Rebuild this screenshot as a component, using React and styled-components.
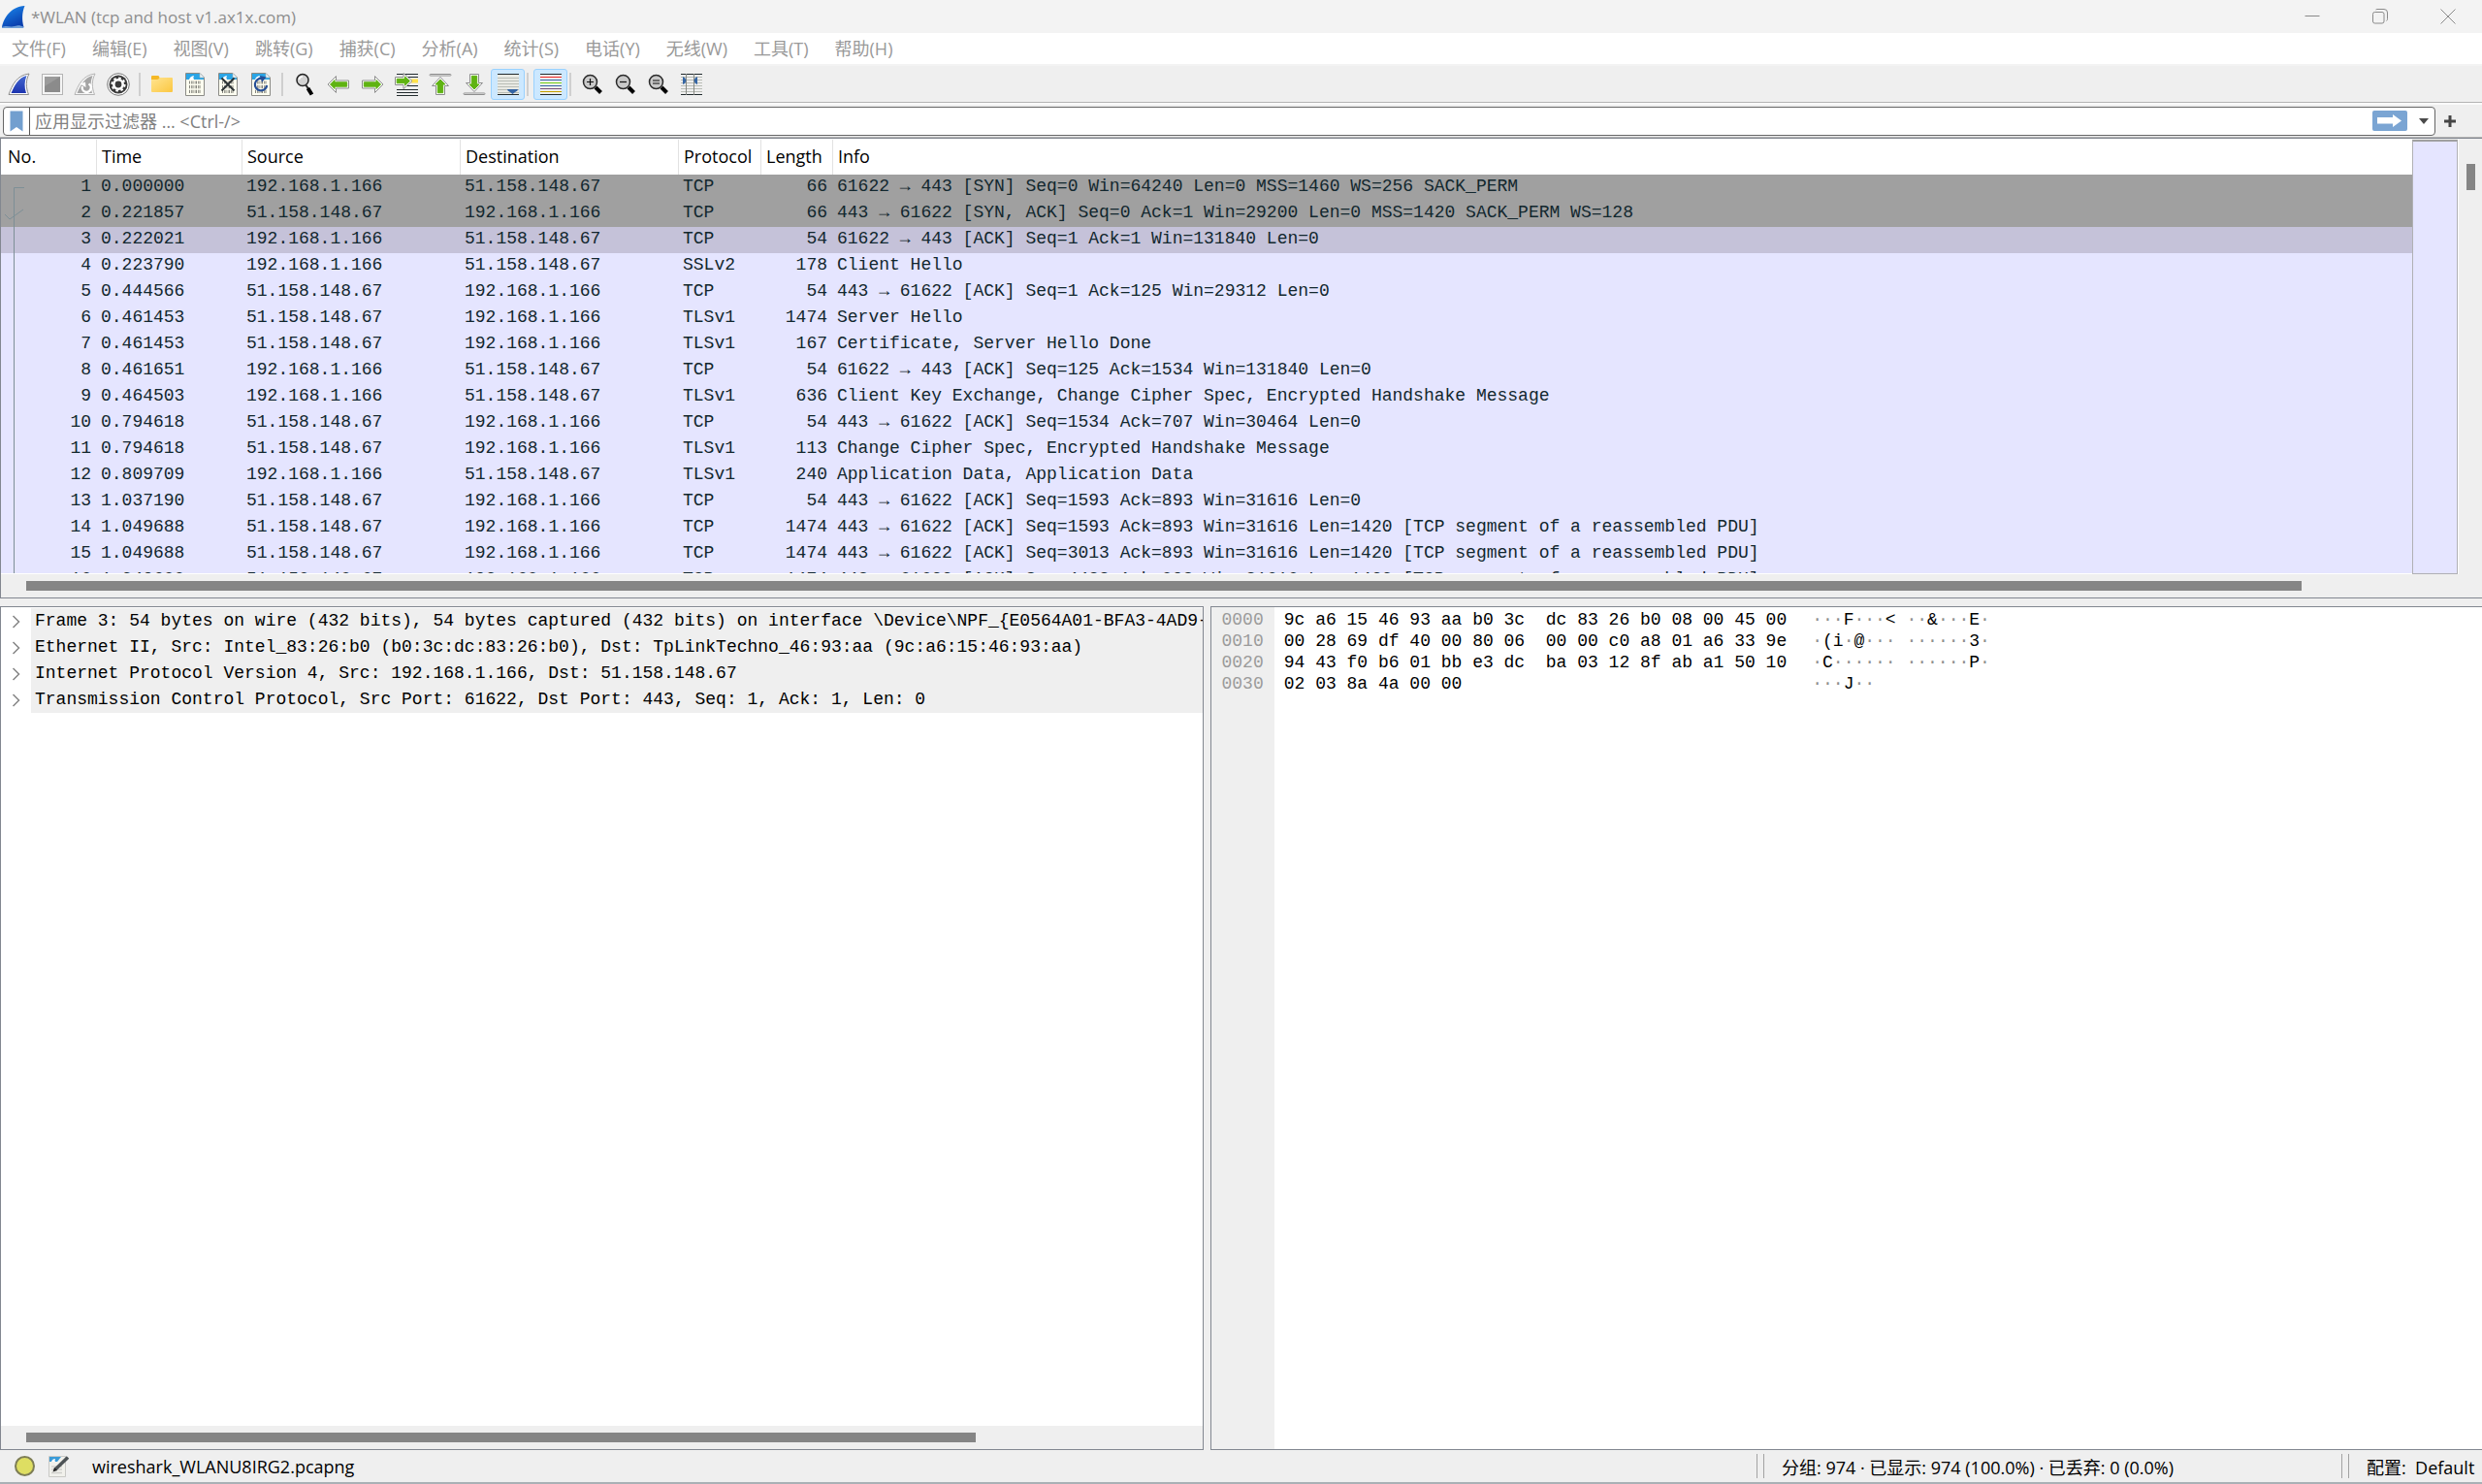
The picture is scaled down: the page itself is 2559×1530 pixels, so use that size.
import React from 'react';
import styled, { createGlobalStyle, css } from 'styled-components';

const MENUS = [
  '文件(F)',
  '编辑(E)',
  '视图(V)',
  '跳转(G)',
  '捕获(C)',
  '分析(A)',
  '统计(S)',
  '电话(Y)',
  '无线(W)',
  '工具(T)',
  '帮助(H)',
];

const LOCAL = '192.168.1.166';
const REMOTE = '51.158.148.67';

const PACKETS = [
  ['0.000000', 'out', 'TCP', 66, '61622 → 443 [SYN] Seq=0 Win=64240 Len=0 MSS=1460 WS=256 SACK_PERM', 'grey'],
  ['0.221857', 'in', 'TCP', 66, '443 → 61622 [SYN, ACK] Seq=0 Ack=1 Win=29200 Len=0 MSS=1420 SACK_PERM WS=128', 'grey'],
  ['0.222021', 'out', 'TCP', 54, '61622 → 443 [ACK] Seq=1 Ack=1 Win=131840 Len=0', 'selected'],
  ['0.223790', 'out', 'SSLv2', 178, 'Client Hello'],
  ['0.444566', 'in', 'TCP', 54, '443 → 61622 [ACK] Seq=1 Ack=125 Win=29312 Len=0'],
  ['0.461453', 'in', 'TLSv1', 1474, 'Server Hello'],
  ['0.461453', 'in', 'TLSv1', 167, 'Certificate, Server Hello Done'],
  ['0.461651', 'out', 'TCP', 54, '61622 → 443 [ACK] Seq=125 Ack=1534 Win=131840 Len=0'],
  ['0.464503', 'out', 'TLSv1', 636, 'Client Key Exchange, Change Cipher Spec, Encrypted Handshake Message'],
  ['0.794618', 'in', 'TCP', 54, '443 → 61622 [ACK] Seq=1534 Ack=707 Win=30464 Len=0'],
  ['0.794618', 'in', 'TLSv1', 113, 'Change Cipher Spec, Encrypted Handshake Message'],
  ['0.809709', 'out', 'TLSv1', 240, 'Application Data, Application Data'],
  ['1.037190', 'in', 'TCP', 54, '443 → 61622 [ACK] Seq=1593 Ack=893 Win=31616 Len=0'],
  ['1.049688', 'in', 'TCP', 1474, '443 → 61622 [ACK] Seq=1593 Ack=893 Win=31616 Len=1420 [TCP segment of a reassembled PDU]'],
  ['1.049688', 'in', 'TCP', 1474, '443 → 61622 [ACK] Seq=3013 Ack=893 Win=31616 Len=1420 [TCP segment of a reassembled PDU]'],
  ['1.049688', 'in', 'TCP', 1474, '443 → 61622 [ACK] Seq=4433 Ack=893 Win=31616 Len=1420 [TCP segment of a reassembled PDU]'],
];

const COLUMNS = [
  { name: 'No.', width: 98 },
  { name: 'Time', width: 150 },
  { name: 'Source', width: 225 },
  { name: 'Destination', width: 225 },
  { name: 'Protocol', width: 85 },
  { name: 'Length', width: 74 },
  { name: 'Info' },
];

const DETAILS = [
  'Frame 3: 54 bytes on wire (432 bits), 54 bytes captured (432 bits) on interface \\Device\\NPF_{E0564A01-BFA3-4AD9-9',
  'Ethernet II, Src: Intel_83:26:b0 (b0:3c:dc:83:26:b0), Dst: TpLinkTechno_46:93:aa (9c:a6:15:46:93:aa)',
  'Internet Protocol Version 4, Src: 192.168.1.166, Dst: 51.158.148.67',
  'Transmission Control Protocol, Src Port: 61622, Dst Port: 443, Seq: 1, Ack: 1, Len: 0',
];

const HEX = [
  ['0000', '9c a6 15 46 93 aa b0 3c  dc 83 26 b0 08 00 45 00', '···F···< ··&···E·'],
  ['0010', '00 28 69 df 40 00 80 06  00 00 c0 a8 01 a6 33 9e', '·(i·@··· ······3·'],
  ['0020', '94 43 f0 b6 01 bb e3 dc  ba 03 12 8f ab a1 50 10', '·C······ ······P·'],
  ['0030', '02 03 8a 4a 00 00', '···J··'],
];

/* icons */

const FIN = 'M1 22.5C4.5 13 9 2.5 22 1C18.5 8 18.5 15 21.5 22.5Z';
const FIN_INNER = 'M3.5 21C7 13 11 5 19.5 3C17 9 17 15 19 21Z';

const LogoIcon = () => (
  <svg width="26" height="26" viewBox="0 0 26 26">
    <defs>
      <linearGradient id="logo" x1="0" y1="0" x2="0.5" y2="1">
        <stop offset="0" stopColor="#1b8cf0" />
        <stop offset="1" stopColor="#0a3fae" />
      </linearGradient>
    </defs>
    <path d="M2 24C4 14 11 3 25.500 2C22.500 9 22.500 17 24.500 24Z" fill="url(#logo)" />
    <path d="M2 24C7 21.500 10 24.500 15 23S21 22.500 24 23.500L24.500 25H2Z" fill="#6f9fd8" />
  </svg>
);

const FinIcon = () => (
  <svg width="24" height="24" viewBox="0 0 24 24">
    <defs>
      <linearGradient id="fin" x1="0" y1="0" x2="0" y2="1">
        <stop offset="0" stopColor="#4468d0" />
        <stop offset="1" stopColor="#1d34b0" />
      </linearGradient>
    </defs>
    <path d={FIN} fill="#fff" stroke="#8c8c8c" />
    <path d={FIN_INNER} fill="url(#fin)" />
  </svg>
);

const StopIcon = () => (
  <svg width="24" height="24" viewBox="0 0 24 24">
    <rect x="1.500" y="1.500" width="21" height="21" fill="#f4f4f4" stroke="#b4b4b4" />
    <rect x="4" y="4" width="16" height="16" fill="#8b8b8b" />
    <path d="M4 4H20L4 14Z" fill="#9b9b9b" />
  </svg>
);

const RestartIcon = () => (
  <svg width="24" height="24" viewBox="0 0 24 24">
    <path d={FIN} fill="#f6f6f6" stroke="#b5b5b5" />
    <path d={FIN_INNER} fill="#a5a5a5" />
    <path d="M9 14A4.500 4.500 0 1 0 15.500 11.500" fill="none" stroke="#fff" strokeWidth="2.400" />
    <path d="M6.500 11.500L12 9.500L12.500 15Z" fill="#fff" />
  </svg>
);

const GearIcon = () => (
  <svg width="24" height="24" viewBox="0 0 24 24">
    <circle cx="12" cy="12" r="11.300" fill="#fff" stroke="#777" />
    <circle cx="12" cy="12" r="9.500" fill="#3a3a3a" />
    <circle cx="12" cy="12" r="4.700" fill="none" stroke="#fff" strokeWidth="2.600" />
    <circle cx="12" cy="12" r="6.600" fill="none" stroke="#fff" strokeWidth="2" strokeDasharray="2.590 2.590" />
  </svg>
);

const FolderIcon = () => (
  <svg width="24" height="24" viewBox="0 0 24 24">
    <defs>
      <linearGradient id="folder" x1="0" y1="0" x2="1" y2="1">
        <stop offset="0" stopColor="#ffe491" />
        <stop offset="1" stopColor="#fbc740" />
      </linearGradient>
    </defs>
    <rect x="1" y="5" width="22" height="15" rx="1" fill="url(#folder)" />
    <path d="M1 7V4Q1 3 2 3H8Q9 3 9.500 5Q8.500 7 7 7Z" fill="#f5b826" />
  </svg>
);

const Sheet = () => (
  <>
    <path d="M2.500 0.500H17L21.500 5V23.500H2.500Z" fill="#fdfdf0" stroke="#8b8b86" />
    <path d="M3 1H17V5H21V7H3Z" fill="#2aa5e6" />
    <path d="M6 7Q7 3.500 11 3Q9.500 5.500 11 7Z" fill="#fff" />
    <path d="M17 0.500V5H21.500Z" fill="#e8f4fa" stroke="#a9b6bb" strokeWidth="0.600" />
    <g fill="none" stroke="#85857d" strokeWidth="3.200">
      <path d="M6 10H18M6 14.700H18M6 19.400H18" strokeDasharray="1 1.200 0.800 0.500" />
    </g>
  </>
);

const SheetIcon = () => (
  <svg width="24" height="24" viewBox="0 0 24 24">
    <Sheet />
  </svg>
);

const CloseSheetIcon = () => (
  <svg width="24" height="24" viewBox="0 0 24 24">
    <Sheet />
    <path d="M5.500 5.500L18.500 18.500M18.500 5.500L5.500 18.500" stroke="#2c3335" strokeWidth="2" />
  </svg>
);

const ReloadSheetIcon = () => (
  <svg width="24" height="24" viewBox="0 0 24 24">
    <Sheet />
    <path d="M13 6A6.200 6.200 0 1 0 18.200 13" fill="none" stroke="#264f96" strokeWidth="2.200" />
    <path d="M11 3L17.500 4.500L13 10Z" fill="#264f96" />
  </svg>
);

const FindIcon = () => (
  <svg width="24" height="24" viewBox="0 0 24 24">
    <path d="M13.500 13L16 16.500" stroke="#222" strokeWidth="2" />
    <path d="M15.500 16L19.500 22.500" stroke="#000" strokeWidth="4" />
    <circle cx="10" cy="7.500" r="6" fill="#d2d2d2" stroke="#222" strokeWidth="1.500" />
    <path d="M6.500 7Q7 4 10 4" fill="none" stroke="#fff" strokeWidth="1.500" />
  </svg>
);

const ArrowIcon = ({ flip }) => (
  <svg width="24" height="24" viewBox="0 0 24 24">
    <g transform={flip ? 'matrix(-1 0 0 1 24 0)' : undefined}>
      <path
        d="M1 12L9.500 3.500V8H22.500V16H9.500V20.500Z"
        fill="#fff"
        stroke="#8e8e8e"
        strokeLinejoin="round"
      />
      <path d="M3.500 12L8 7.500V9.800H20.700V14.200H8V16.500Z" fill="#5fb312" stroke="#5fb312" strokeLinejoin="round" />
    </g>
  </svg>
);

const GotoIcon = () => (
  <svg width="26" height="24" viewBox="0 0 26 24">
    <path d="M3 1.500H25M3 17.500H25M3 20.500H25M3 23.500H25M14 4.500H25M14 13.500H25" stroke="#222b2e" />
    <rect x="18" y="6.500" width="7" height="4" fill="#ffe14a" />
    <path d="M1.500 4.500H10V0.500L19 8.500L10 16.500V12.500H1.500Z" fill="#fff" stroke="#8e8e8e" strokeLinejoin="round" />
    <path d="M3.200 6.300H11.500V4L16.500 8.500L11.500 13V10.700H3.200Z" fill="#5fb312" stroke="#5fb312" strokeLinejoin="round" />
  </svg>
);

const EdgeIcon = ({ down }) => (
  <svg width="24" height="24" viewBox="0 0 24 24">
    <g transform={down ? 'matrix(1 0 0 -1 0 24)' : undefined}>
      <rect x="1" y="1.500" width="22" height="1.500" rx="0.700" fill="#fff" stroke="#8e8e8e" />
      <path d="M12 4.500L20.500 13.500H16.500V22.500H7.500V13.500H3.500Z" fill="#fff" stroke="#8e8e8e" strokeLinejoin="round" />
      <path d="M12 7L17 12H14.700V20.700H9.300V12H7Z" fill="#5fb312" stroke="#5fb312" strokeLinejoin="round" />
    </g>
  </svg>
);

const AutoScrollIcon = () => (
  <svg width="24" height="24" viewBox="0 0 24 24">
    <rect x="1" y="1" width="22" height="22" fill="#e9eae4" />
    <path d="M1 5.500H23M1 8.500H23M1 11.500H23M1 14.500H23M1 17.500H23M1 20.500H23" stroke="#b9bdb6" />
    <path d="M1 1.500H23M1 22.500H23" stroke="#222b2e" />
    <path d="M11 17H22Q22 19 19 20L16.500 22L14 20Q11 19 11 17Z" fill="#3465a4" />
  </svg>
);

const RAINBOW = ['#222b2e', '#ef2929', '#3465a4', '#73d216', '#3465a4', '#75507b', '#c4a000', '#222b2e'];

const ColorizeIcon = () => (
  <svg width="24" height="24" viewBox="0 0 24 24">
    <rect x="1" y="1" width="22" height="22" fill="#eeeeec" />
    {RAINBOW.map((color, i) => (
      <rect key={i} x="1" y={1 + i * 3} width="22" height="1" fill={color} />
    ))}
  </svg>
);

const ZoomIcon = ({ sign }) => (
  <svg width="24" height="24" viewBox="0 0 24 24">
    <path d="M15 15L20.500 20.500" stroke="#000" strokeWidth="4" />
    <circle cx="9.500" cy="9.500" r="7" fill="#c9c9c9" stroke="#2a2a2a" strokeWidth="1.500" />
    <path d={sign} stroke="#111" strokeWidth="1.200" />
  </svg>
);

const ResizeIcon = () => (
  <svg width="24" height="24" viewBox="0 0 24 24">
    <path d="M1 4.500H23M1 7.500H23M1 10.500H23M1 13.500H23M1 16.500H23M1 19.500H23" stroke="#b9bdb6" />
    <path d="M1 1.500H23M1 22.500H23" stroke="#222b2e" />
    <path d="M6.500 1V23M14.500 1V23" stroke="#888a85" />
    <path d="M3 4Q6 5 6.500 8Q6 11 3 12ZM18 4Q15 5 14.500 8Q15 11 18 12Z" fill="#3465a4" />
  </svg>
);

const BookmarkIcon = () => (
  <svg width="14" height="22" viewBox="0 0 14 22">
    <path d="M0.500 0.500H13.500V21.500L7 17L0.500 21.500Z" fill="#729fcf" />
  </svg>
);

const ApplyIcon = () => (
  <svg width="36" height="21" viewBox="0 0 36 21">
    <rect width="36" height="21" rx="2" fill="#7ba5d3" />
    <path d="M5 7H21V4L30 10.500L21 17V13.500H5Z" fill="#fff" />
  </svg>
);

const EditIcon = () => (
  <svg width="22" height="22" viewBox="0 0 22 22">
    <path d="M0.500 0.500H17.500V21.500H0.500Z" fill="#f1f1ec" stroke="#c9c9c6" />
    <path d="M1 1H13L9 6H1Z" fill="#3a9bd8" />
    <path d="M3 6Q4 3 7 3Q6 5 7 6Z" fill="#fff" />
    <path d="M3 11H14M3 14H14M3 17.500H14" stroke="#cfcfcb" strokeWidth="1.500" />
    <path d="M7 14L20 1.500" stroke="#4d5356" strokeWidth="3.500" />
    <path d="M4.500 16.500L6 12L9 15Z" fill="#222" />
  </svg>
);

const ChevronIcon = () => (
  <svg width="10" height="14" viewBox="0 0 10 14">
    <path d="M1.500 1L7.500 7L1.500 13" fill="none" stroke="#858585" strokeWidth="1.500" />
  </svg>
);

const Tool = ({ label, children, checked }) => (
  <ToolButton
    type="button"
    aria-label={label}
    aria-pressed={checked}
    $checked={checked}
  >
    {children}
  </ToolButton>
);

const PacketTable = () => (
  <ListViewport>
    <Table>
      <colgroup>
        {COLUMNS.map(({ name, width }) => (
          <col key={name} width={width} />
        ))}
      </colgroup>
      <thead>
        <tr>
          {COLUMNS.map(({ name }) => (
            <HeadCell key={name} scope="col">
              {name}
            </HeadCell>
          ))}
        </tr>
      </thead>
      <tbody>
        {PACKETS.map(([time, direction, protocol, length, info, tone], i) => (
          <Row key={i} $tone={tone}>
            <Cell $right>{i + 1}</Cell>
            <Cell>{time}</Cell>
            <Cell>{direction === 'out' ? LOCAL : REMOTE}</Cell>
            <Cell>{direction === 'out' ? REMOTE : LOCAL}</Cell>
            <Cell>{protocol}</Cell>
            <Cell $right>{length}</Cell>
            <Cell>{info}</Cell>
          </Row>
        ))}
      </tbody>
    </Table>
    <Conversation width="26" height="411" viewBox="0 0 26 411" aria-hidden="true">
      <path d="M24 13.500H13.500V411M4 41L9 46L23 36" fill="none" stroke="#7d8f96" />
    </Conversation>
  </ListViewport>
);

const Ascii = ({ text }) => (
  <span>
    {text.split(/(·+)/).map((part, i) =>
      part.startsWith('·') ? <Faint key={i}>{part}</Faint> : part
    )}
  </span>
);

const App = () => (
  <Window>
    <GlobalStyle />
    <TitleBar>
      <LogoIcon />
      <Title>*WLAN (tcp and host v1.ax1x.com)</Title>
      <WindowButton type="button" aria-label="最小化">
        <svg width="16" height="16" viewBox="0 0 16 16">
          <path d="M0.500 7.500H15.500" />
        </svg>
      </WindowButton>
      <WindowButton type="button" aria-label="还原">
        <svg width="16" height="16" viewBox="0 0 16 16">
          <rect x="0.500" y="3.500" width="11.500" height="11.500" rx="2" />
          <path d="M3.500 1Q4 0.500 5 0.500H12Q15.500 0.500 15.500 4V10.500Q15.500 12 14.500 12.500" />
        </svg>
      </WindowButton>
      <WindowButton type="button" aria-label="关闭">
        <svg width="16" height="16" viewBox="0 0 16 16">
          <path d="M0.500 0.500L15.500 15.500M15.500 0.500L0.500 15.500" />
        </svg>
      </WindowButton>
    </TitleBar>

    <MenuBar>
      {MENUS.map((name) => (
        <MenuButton key={name} type="button">
          {name}
        </MenuButton>
      ))}
    </MenuBar>

    <ToolBar>
      <Tool label="开始捕获"><FinIcon /></Tool>
      <Tool label="停止捕获"><StopIcon /></Tool>
      <Tool label="重新开始捕获"><RestartIcon /></Tool>
      <Tool label="捕获选项"><GearIcon /></Tool>
      <ToolSeparator />
      <Tool label="打开"><FolderIcon /></Tool>
      <Tool label="保存"><SheetIcon /></Tool>
      <Tool label="关闭文件"><CloseSheetIcon /></Tool>
      <Tool label="重新加载"><ReloadSheetIcon /></Tool>
      <ToolSeparator />
      <Navigation>
        <Tool label="查找分组"><FindIcon /></Tool>
        <Tool label="上一分组"><ArrowIcon /></Tool>
        <Tool label="下一分组"><ArrowIcon flip /></Tool>
        <Tool label="转到分组"><GotoIcon /></Tool>
        <Tool label="首个分组"><EdgeIcon /></Tool>
        <Tool label="最新分组"><EdgeIcon down /></Tool>
      </Navigation>
      <Tool label="自动滚动" checked><AutoScrollIcon /></Tool>
      <ToolSeparator $narrow />
      <Tool label="着色" checked><ColorizeIcon /></Tool>
      <ToolSeparator $narrow />
      <Tool label="放大"><ZoomIcon sign="M6 9.500H13M9.500 6V13" /></Tool>
      <Tool label="缩小"><ZoomIcon sign="M6 9.500H13" /></Tool>
      <Tool label="正常大小"><ZoomIcon sign="M6 8H13M6 11H13" /></Tool>
      <Tool label="调整列宽"><ResizeIcon /></Tool>
    </ToolBar>

    <FilterBar>
      <FilterBox>
        <BookmarkButton type="button" aria-label="书签">
          <BookmarkIcon />
        </BookmarkButton>
        <FilterInput
          type="text"
          aria-label="显示过滤器"
          placeholder="应用显示过滤器 … <Ctrl-/>"
        />
        <PlainButton type="button" aria-label="应用">
          <ApplyIcon />
        </PlainButton>
        <PlainButton type="button" aria-label="历史">
          <svg width="10" height="6" viewBox="0 0 10 6">
            <path d="M0 0H10L5 6Z" fill="#4a4a4a" />
          </svg>
        </PlainButton>
      </FilterBox>
      <AddButton type="button" aria-label="添加过滤器按钮">
        <svg width="12" height="12" viewBox="0 0 12 12">
          <path d="M6 0V12M0 6H12" stroke="#454545" strokeWidth="3" />
        </svg>
      </AddButton>
    </FilterBar>

    <Workspace>
      <ListPane>
        <ListArea>
          <PacketTable />
          <Minimap />
          <VerticalScroll>
            <VerticalThumb />
          </VerticalScroll>
        </ListArea>
        <HorizontalScroll>
          <HorizontalThumb $end={160} />
        </HorizontalScroll>
      </ListPane>

      <LowerPanes>
        <DetailsPane>
          <Tree>
            {DETAILS.map((text) => (
              <TreeItem key={text}>
                <Expander type="button" aria-label="展开">
                  <ChevronIcon />
                </Expander>
                <TreeText>{text}</TreeText>
              </TreeItem>
            ))}
          </Tree>
          <HorizontalScroll>
            <HorizontalThumb $end={208} />
          </HorizontalScroll>
        </DetailsPane>

        <BytesPane>
          <Offsets>
            {HEX.map(([offset]) => (
              <span key={offset}>{offset}</span>
            ))}
          </Offsets>
          <Bytes>
            {HEX.map(([offset, bytes]) => (
              <span key={offset}>{bytes}</span>
            ))}
          </Bytes>
          <Bytes>
            {HEX.map(([offset, , text]) => (
              <Ascii key={offset} text={text} />
            ))}
          </Bytes>
        </BytesPane>
      </LowerPanes>
    </Workspace>

    <StatusBar>
      <FileStatus>
        <ExpertButton type="button" aria-label="专家信息" />
        <NoteButton type="button" aria-label="捕获文件注释">
          <EditIcon />
        </NoteButton>
        <FileName>wireshark_WLANU8IRG2.pcapng</FileName>
      </FileStatus>
      <StatusGroup $width={603}>分组: 974 · 已显示: 974 (100.0%) · 已丢弃: 0 (0.0%)</StatusGroup>
      <StatusGroup $width={145}>配置:&nbsp; Default</StatusGroup>
    </StatusBar>
  </Window>
);

const GlobalStyle = createGlobalStyle`
  * {
    box-sizing: border-box;
  }

  body {
    margin: 0;
    font-family: 'Open Sans', 'Noto Sans CJK SC', sans-serif;
    font-size: 18px;
    color: #000;
    background: #efefef;
  }

  button,
  input {
    font: inherit;
    color: inherit;
    border: 0;
    padding: 0;
    background: none;
  }

  svg {
    display: block;
    flex-shrink: 0;
  }
`;

const mono = css`
  font-family: 'Liberation Mono', 'Noto Sans CJK SC', monospace;
  font-size: 18px;
  white-space: pre;
`;

const Window = styled.div`
  display: flex;
  flex-direction: column;
  height: 100vh;
  overflow: hidden;
  border-bottom: 2px solid #a9b0b5;
`;

const TitleBar = styled.header`
  display: flex;
  align-items: center;
  height: 34px;
  background: #f3f3f3;
`;

const Title = styled.h1`
  flex: 1;
  margin: 0;
  padding-left: 6px;
  font-size: 17px;
  font-weight: 400;
  color: #8e8e8e;
`;

const WindowButton = styled.button`
  display: flex;
  align-items: center;
  justify-content: center;
  width: 70px;
  height: 34px;

  path,
  rect {
    fill: none;
    stroke: #8a8a8a;
  }
`;

const MenuBar = styled.nav`
  display: flex;
  height: 34px;
  padding-left: 12px;
  gap: 27px;
  background: #fff;
  border-bottom: 2px solid #f3f3f3;
`;

const MenuButton = styled.button`
  line-height: 32px;
  color: #999;
  white-space: nowrap;
`;

const ToolBar = styled.div`
  display: flex;
  align-items: center;
  height: 38px;
  padding: 1px 0 0 3px;
  border-bottom: 1px solid #b4b4b4;
`;

const ToolButton = styled.button`
  display: flex;
  align-items: center;
  justify-content: center;
  width: 34px;
  height: 32px;

  ${({ $checked }) =>
    $checked &&
    css`
      width: 35px;
      border: 1px solid #99d1ff;
      border-radius: 3px;
      background: #cce8ff;
    `}
`;

const Navigation = styled.div`
  display: flex;
  gap: 1px;
`;

const ToolSeparator = styled.span`
  width: 2px;
  height: 24px;
  margin: 0 5px 0 ${({ $narrow }) => ($narrow ? '2px' : '4px')};
  background: #cfcfcf;
`;

const FilterBar = styled.div`
  display: flex;
  align-items: center;
  height: 36px;
  padding: 2px 21px 2px 3px;
  border-top: 2px solid #fafafa;
  border-bottom: 1px solid #b4b4b4;
`;

const FilterBox = styled.div`
  display: flex;
  flex: 1;
  align-items: center;
  height: 30px;
  border: 1px solid #666;
  border-radius: 4px;
  background: #fff;
`;

const BookmarkButton = styled.button`
  display: flex;
  align-items: center;
  justify-content: center;
  width: 27px;
  height: 28px;
  border-right: 1px solid #555;
`;

const FilterInput = styled.input`
  flex: 1;
  min-width: 0;
  height: 28px;
  padding-left: 5px;
  outline: 0;

  &::placeholder {
    color: #808080;
    opacity: 1;
  }
`;

const PlainButton = styled.button`
  display: flex;
  align-items: center;
  padding: 0 6px;
`;

const AddButton = styled(PlainButton)`
  padding: 0 6px 0 9px;
`;

const NoteButton = styled(PlainButton)`
  padding: 0;
`;

const Workspace = styled.main`
  display: flex;
  flex: 1;
  flex-direction: column;
  min-height: 0;
  gap: 8px;
`;

const ListPane = styled.section`
  display: flex;
  flex: 473 1 0;
  flex-direction: column;
  min-height: 0;
  border: 1px solid #828790;
  border-right: 0;
`;

const ListArea = styled.div`
  display: flex;
  flex: 1;
  min-height: 0;
`;

const ListViewport = styled.div`
  position: relative;
  flex: 1;
  overflow: hidden;
  border-top: 1px solid #f6f6f6;
  border-bottom: 1px solid #fff;
  background: #e5e5ff;
`;

const Conversation = styled.svg`
  position: absolute;
  top: 36px;
  left: 0;
`;

const Table = styled.table`
  width: 100%;
  table-layout: fixed;
  border-spacing: 0;
`;

const HeadCell = styled.th`
  height: 36px;
  padding: 0 0 2px 7px;
  font-weight: 400;
  text-align: left;
  background: #fff;

  & + & {
    padding-left: 5px;
    border-left: 1px solid #e2e2e2;
  }
`;

const tones = {
  grey: '#a0a0a0',
  selected: '#c5c2d9',
};

const Row = styled.tr`
  background: ${({ $tone }) => tones[$tone] || '#e5e5ff'};
`;

const Cell = styled.td`
  ${mono}
  height: 27px;
  padding: 0 5px 3px;
  line-height: 24px;
  color: #12272e;
  text-align: ${({ $right }) => ($right ? 'right' : 'left')};
`;

const Minimap = styled.div`
  width: 47px;
  margin-top: 1px;
  border: 1px solid #b0b0b4;
  border-top: 2px solid #a0a0a0;
  background: #e5e5ff;
`;

const VerticalScroll = styled.div`
  width: 25px;
  padding: 26px 7px 0 8px;
  border-left: 1px solid #fff;
`;

const VerticalThumb = styled.div`
  height: 27px;
  background: #858585;
`;

const HorizontalScroll = styled.div`
  height: 24px;
  padding: 7px 26px;
`;

const HorizontalThumb = styled.div`
  height: 10px;
  margin-right: ${({ $end }) => $end}px;
  background: #858585;
`;

const LowerPanes = styled.div`
  display: flex;
  flex: 870 1 0;
  min-height: 0;
  gap: 7px;
`;

const DetailsPane = styled.section`
  display: flex;
  flex: 1239 1 0;
  flex-direction: column;
  min-width: 0;
  border: 1px solid #828790;
`;

const Tree = styled.ul`
  flex: 1;
  margin: 0;
  padding: 1px 0 0;
  list-style: none;
  overflow: hidden;
  background: #fff;
`;

const TreeItem = styled.li`
  display: flex;
  height: 27px;
`;

const Expander = styled.button`
  display: flex;
  align-items: center;
  justify-content: center;
  width: 31px;
  flex-shrink: 0;
`;

const TreeText = styled.span`
  ${mono}
  flex: 1;
  min-width: 0;
  padding: 1px 0 1px 4px;
  overflow: hidden;
  line-height: 25px;
  background: #efefef;
`;

const BytesPane = styled.section`
  ${mono}
  display: flex;
  flex: 1311 1 0;
  min-width: 0;
  line-height: 22px;
  border: 1px solid #828790;
  border-right: 0;
  background: #fff;
`;

const Bytes = styled.div`
  display: flex;
  flex-direction: column;
  padding: 2px 16px 0 10px;
`;

const Offsets = styled(Bytes)`
  padding: 2px 11px 0;
  color: #9b9b9b;
  background: #efefef;
`;

const Faint = styled.span`
  color: #8f8f8f;
`;

const StatusBar = styled.footer`
  display: flex;
  align-items: center;
  height: 33px;
`;

const FileStatus = styled.div`
  display: flex;
  flex: 1;
  align-items: center;
  padding-left: 15px;
`;

const ExpertButton = styled.button`
  width: 21px;
  height: 21px;
  margin-right: 14px;
  border: 2px solid #7d7d55;
  border-radius: 50%;
  background: #dede62;
`;

const FileName = styled.span`
  padding-left: 23px;
`;

const StatusGroup = styled.div`
  display: flex;
  align-items: center;
  width: ${({ $width }) => $width}px;
  white-space: nowrap;

  &::before {
    content: '';
    width: 6px;
    height: 25px;
    margin-right: 18px;
    border: 1px solid #a3a3a3;
    border-width: 0 1px;
  }
`;

export default App;
